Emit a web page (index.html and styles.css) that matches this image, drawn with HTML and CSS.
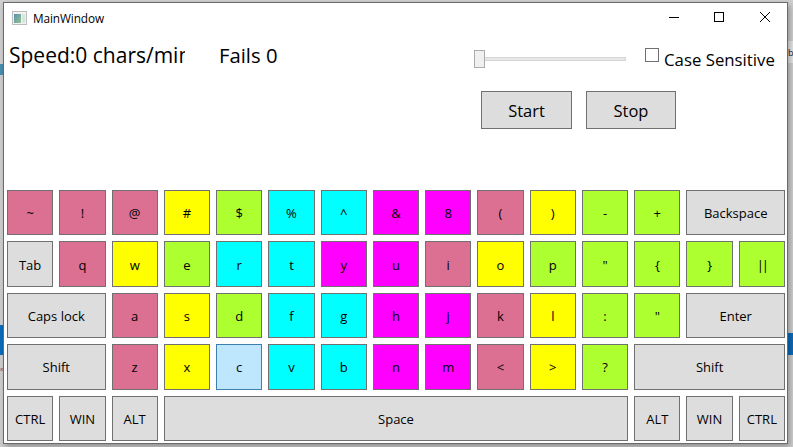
FILE: index.html
```html
<!DOCTYPE html>
<html lang="en">
<head>
<meta charset="utf-8">
<title>MainWindow</title>
<link rel="stylesheet" href="styles.css">
</head>
<body>
<div class="desk desk-blue-left"></div>
<div class="desk desk-blue-left-top"></div>
<div class="desk desk-blue-right"></div>
<div class="desk desk-band-right"></div>
<div class="desk desk-letter-right">b</div>
<div class="desk desk-letter-left">x</div>
<div class="window">
  <header class="titlebar">
    <svg class="app-icon" width="15" height="14" viewBox="0 0 15 14">
      <defs><linearGradient id="g" x1="0" y1="0" x2="1" y2="1"><stop offset="0" stop-color="#5a8fb0"/><stop offset="1" stop-color="#8fc48f"/></linearGradient></defs>
      <rect x="0.5" y="0.5" width="14" height="13" fill="#f2f2f2" stroke="#bcbcbc"/>
      <rect x="2" y="3" width="7" height="9" fill="url(#g)"/>
      <rect x="10" y="3" width="3" height="9" fill="#d5e6de"/>
    </svg>
    <span class="title">MainWindow</span>
    <div class="caption">
      <svg class="cap-btn" width="46" height="30" viewBox="0 0 46 30"><path d="M20 14.5H30" stroke="#000" fill="none"/></svg>
      <svg class="cap-btn" width="46" height="30" viewBox="0 0 46 30"><rect x="19.5" y="9.5" width="9" height="9" stroke="#000" fill="none"/></svg>
      <svg class="cap-btn" width="46" height="30" viewBox="0 0 46 30"><path d="M19 9L29 19M29 9L19 19" stroke="#000" fill="none"/></svg>
    </div>
  </header>
  <section class="panel">
    <div class="stats">
      <div class="speed">Speed:0 chars/min</div>
      <div class="fails">Fails 0</div>
      <div class="slider"><div class="track"></div><div class="thumb"></div></div>
      <label class="check"><span class="box"></span><span class="check-label">Case Sensitive</span></label>
    </div>
    <div class="actions">
      <button class="action">Start</button>
      <button class="action">Stop</button>
    </div>
  </section>
  <section class="keyboard">
    <div class="key pink">~</div><div class="key pink">!</div><div class="key pink">@</div><div class="key yellow">#</div><div class="key green">$</div><div class="key cyan">%</div><div class="key cyan">^</div><div class="key magenta">&amp;</div><div class="key magenta">8</div><div class="key pink">(</div><div class="key yellow">)</div><div class="key green">-</div><div class="key green">+</div><div class="key span2">Backspace</div>
    <div class="key">Tab</div><div class="key pink">q</div><div class="key yellow">w</div><div class="key green">e</div><div class="key cyan">r</div><div class="key cyan">t</div><div class="key magenta">y</div><div class="key magenta">u</div><div class="key pink">i</div><div class="key yellow">o</div><div class="key green">p</div><div class="key green">"</div><div class="key green">{</div><div class="key green">}</div><div class="key green tight">||</div>
    <div class="key span2">Caps lock</div><div class="key pink">a</div><div class="key yellow">s</div><div class="key green">d</div><div class="key cyan">f</div><div class="key cyan">g</div><div class="key magenta">h</div><div class="key magenta">j</div><div class="key pink">k</div><div class="key yellow">l</div><div class="key green">:</div><div class="key green">"</div><div class="key span2">Enter</div>
    <div class="key span2">Shift</div><div class="key pink">z</div><div class="key yellow">x</div><div class="key hover">c</div><div class="key cyan">v</div><div class="key cyan">b</div><div class="key magenta">n</div><div class="key magenta">m</div><div class="key pink">&lt;</div><div class="key yellow">&gt;</div><div class="key green">?</div><div class="key span3">Shift</div>
    <div class="key">CTRL</div><div class="key">WIN</div><div class="key">ALT</div><div class="key span9">Space</div><div class="key">ALT</div><div class="key">WIN</div><div class="key">CTRL</div>
  </section>
</div>
</body>
</html>
```
FILE: styles.css
```css
* { box-sizing: border-box; }
html, body { margin: 0; height: 100%; }
body {
  position: relative;
  width: 793px;
  height: 447px;
  overflow: hidden;
  padding: 2px 5px 0 3px;
  background: #cfcfcf;
  font-family: "Open Sans", "Noto Sans", sans-serif;
  color: #000;
}
.desk { position: absolute; }
.desk-blue-left { left: 0; top: 325px; width: 3px; height: 30px; background: #0c6bb8; }
.desk-blue-left-top { left: 0; top: 64px; width: 3px; height: 11px; background: #4a8db0; }
.desk-blue-right { left: 788px; top: 333px; width: 5px; height: 22px; background: #0c6bb8; }
.desk-band-right { left: 788px; top: 41px; width: 5px; height: 22px; background: #e6e6e6; }
.desk-letter-right { left: 788px; top: 46px; font-size: 9px; line-height: 14px; color: #222; }
.desk-letter-left { left: 0; top: 364px; font-size: 6px; line-height: 10px; color: #7a2020; }
.window {
  position: relative;
  width: 785px;
  height: 442px;
  background: #fff;
  border: 1px solid #6a6a6a;
  box-shadow: 2px 3px 6px rgba(0, 0, 0, 0.3);
  display: flex;
  flex-direction: column;
}
.titlebar {
  height: 30px;
  display: flex;
  align-items: center;
  padding-left: 8px;
  flex: none;
}
.app-icon { flex: none; }
.title { margin-left: 6px; font-size: 11.8px; letter-spacing: -0.1px; }
.caption { margin-left: auto; display: flex; }
.cap-btn { display: block; }
.panel { height: 157px; flex: none; }
.stats {
  display: flex;
  align-items: flex-start;
  height: 58px;
  padding: 9px 0 0 5px;
}
.speed {
  width: 176px;
  font-size: 21px;
  line-height: 27px;
  white-space: nowrap;
  overflow: hidden;
}
.fails { margin-left: 34px; width: 100px; font-size: 20.3px; line-height: 27px; white-space: nowrap; }
.slider { position: relative; width: 152px; height: 18px; margin: 8px 0 0 155px; flex: none; }
.track { position: absolute; left: 0; right: 0; top: 7px; height: 4px; background: #e7e7e7; border: 1px solid #d6d6d6; }
.thumb { position: absolute; left: 0; top: 0; width: 11px; height: 18px; background: #f0f0f0; border: 1px solid #acacac; }
.check { display: flex; align-items: flex-start; margin-left: 19px; flex: none; }
.box { width: 14px; height: 14px; margin-top: 6px; background: #fff; border: 1px solid #707070; flex: none; }
.check-label { margin-left: 5px; margin-top: 5px; font-size: 16.8px; line-height: 25px; white-space: nowrap; }
.actions { display: flex; gap: 14px; padding-left: 477px; }
.action {
  width: 91px;
  height: 38px;
  padding: 0 0 0;
  background: #ddd;
  border: 1px solid #707070;
  border-radius: 0;
  font: 16.5px "Open Sans", "Noto Sans", sans-serif;
  color: #000;
}
.action + .action { width: 90px; }
.keyboard {
  display: grid;
  grid-template-columns: repeat(15, 1fr);
  grid-auto-rows: 45.4px;
  gap: 6px;
  padding: 0 2px 0 3px;
}
.key {
  display: flex;
  align-items: center;
  justify-content: center;
  background: #ddd;
  border: 1px solid #707070;
  font-size: 13px;
  padding-top: 1px;
}
.span2 { grid-column: span 2; }
.span3 { grid-column: span 3; }
.span9 { grid-column: span 9; }
.pink { background: #db7093; }
.yellow { background: #ff0; }
.green { background: #adff2f; }
.cyan { background: #0ff; }
.magenta { background: #f0f; }
.hover { background: #bee6fd; border-color: #3c7fb1; }
.tight { letter-spacing: -2px; }
```
